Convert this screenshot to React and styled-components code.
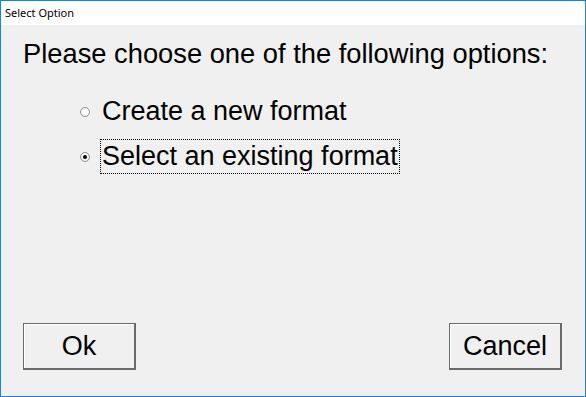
import React, { useState } from 'react';
import styled, { createGlobalStyle } from 'styled-components';

const GlobalStyle = createGlobalStyle`
    html, body {
        margin: 0;
        padding: 0;
        background: #ffffff;
    }
`

const options = ['Create a new format', 'Select an existing format'];

function App() {
    const [selected, setSelected] = useState(1);

    return (
        <Window>
            <GlobalStyle />
            <TitleBar>Select Option</TitleBar>
            <Body>
                <Prompt>Please choose one of the following options:</Prompt>
                <OptionList>
                    {options.map((label, index) => (
                        <Option key={index} onClick={() => setSelected(index)}>
                            <Radio checked={selected === index} />
                            <OptionLabel focused={selected === index}>{label}</OptionLabel>
                        </Option>
                    ))}
                </OptionList>
                <Buttons>
                    <Button>Ok</Button>
                    <Button>Cancel</Button>
                </Buttons>
            </Body>
        </Window>
    )
}

export default App;

const Window = styled.div`
    width: 586px;
    height: 397px;
    box-sizing: border-box;
    border: 1px solid #1883d7;
    display: flex;
    flex-direction: column;
    background: #f0f0f0;
`

const TitleBar = styled.div`
    height: 24px;
    background: #ffffff;
    font-family: "Noto Sans", "Open Sans", sans-serif;
    font-size: 11px;
    line-height: 24px;
    padding-left: 4px;
    color: #000;
`

const Body = styled.div`
    flex: 1;
    display: flex;
    flex-direction: column;
    padding: 13px 23px 0 22px;
    font-family: "Liberation Sans", Arial, sans-serif;
    color: #000;
`

const Prompt = styled.div`
    font-size: 27.3px;
    line-height: 31px;
`

const OptionList = styled.div`
    display: flex;
    flex-direction: column;
    gap: 10px;
    margin-top: 25px;
    padding-left: 57px;
`

const Option = styled.div`
    display: flex;
    align-items: center;
    cursor: pointer;
`

const Radio = styled.span`
    width: 10px;
    height: 10px;
    box-sizing: border-box;
    border-radius: 50%;
    border: 1px solid #8f8f8f;
    background: radial-gradient(circle at 50% 50%, #ffffff 40%, #e6e6e6 100%);
    margin-right: 10px;
    position: relative;
    &::after {
        content: '';
        display: ${props => props.checked ? 'block' : 'none'};
        position: absolute;
        left: 2px;
        top: 2px;
        width: 4px;
        height: 4px;
        border-radius: 50%;
        background: #000;
    }
`

const OptionLabel = styled.span`
    font-size: 27px;
    line-height: 33px;
    padding: 0 1px;
    border: 1px dotted ${props => props.focused ? '#000' : 'transparent'};
`

const Buttons = styled.div`
    margin-top: auto;
    margin-bottom: 26px;
    display: flex;
    justify-content: space-between;
`

const Button = styled.button`
    width: 113px;
    height: 47px;
    box-sizing: border-box;
    background: #f0f0f0;
    border: 1px solid #6a6a6a;
    border-right-width: 2px;
    border-bottom-width: 2px;
    box-shadow: inset 1px 1px 0 #ffffff;
    font-family: "Liberation Sans", Arial, sans-serif;
    font-size: 27px;
    color: #000;
    padding: 0;
`
